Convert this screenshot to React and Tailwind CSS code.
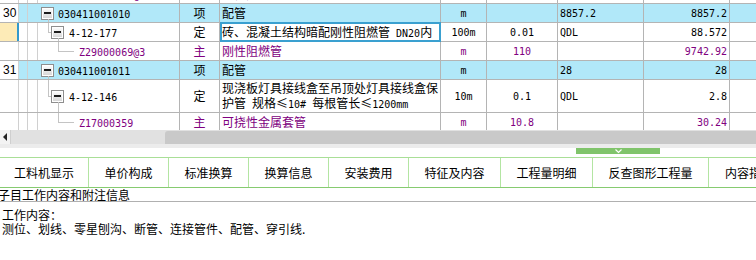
import React from 'react';

function Mix({ text }) {
  const parts = text.split(/([\x20-\x7e]+)/).filter(Boolean);
  return parts.map((p, i) =>
    /^[\x20-\x7e]+$/.test(p) ? (
      <span key={i} className="font-['DejaVu_Sans_Mono',monospace] text-[10px] whitespace-pre">{p}</span>
    ) : (
      <span key={i}>{p}</span>
    )
  );
}

function Mono({ children }) {
  return <span className="font-['DejaVu_Sans_Mono',monospace] text-[10px] whitespace-pre">{children}</span>;
}

function Box() {
  return (
    <div className="w-[13px] h-[13px] shrink-0 border border-[#8e8e8e] bg-linear-to-b from-white to-[#d4d4d4] flex items-center justify-center shadow-[inset_0_0_0_1px_#ffffff]">
      <div className="w-[7px] h-[2px] bg-[#1c1c1c]" />
    </div>
  );
}

function Tree({ lines, h }) {
  return (
    <svg className="absolute left-0 top-0 pointer-events-none" width="142" height={h} shapeRendering="crispEdges">
      {lines.map((l, i) => (
        <line key={i} x1={l[0]} y1={l[1]} x2={l[2]} y2={l[3]} stroke="#c4c4c4" strokeWidth="1" />
      ))}
    </svg>
  );
}

const padFor = { 0: 'pl-[3px]', 1: 'pl-[13px]', 2: 'pl-[41px]' };

function Row({ tall, blue, num, sel, level, lines, code, kind, name, unit, qty, price, total, purple, top }) {
  const h = tall ? 32 : 18;
  const tc = purple ? 'text-[#800080]' : 'text-black';
  return (
    <div
      className={`flex shrink-0 border-b border-[#b4b4b4] ${tall ? 'h-[33px]' : 'h-[19px]'} ${blue ? 'bg-[#b1e8f9]' : 'bg-white'} ${top ? '-mt-[15px]' : ''}`}
    >
      <div
        className={`w-[19px] shrink-0 flex items-center pl-[3px] font-['Liberation_Sans',sans-serif] text-[12px] ${sel ? 'bg-[#fdebb7] border-r-2 border-[#3399cc]' : 'bg-white border-r border-[#d0d0d0]'}`}
      >
        {num}
      </div>
      <div className="w-[9px] shrink-0 border-r border-[#d0d0d0]" />
      <div className={`w-[10px] shrink-0 border-r ${blue ? 'border-transparent' : 'border-[#d0d0d0]'}`} />
      <div className={`relative w-[142px] shrink-0 border-r border-[#b4b4b4] flex items-center ${padFor[level]} ${tc}`}>
        <Tree lines={lines} h={h} />
        {level < 2 && <Box />}
        <span className={level === 0 ? 'ml-[4px] relative' : level === 1 ? 'ml-[5px] relative' : 'relative'}>
          <Mono>{code}</Mono>
        </span>
      </div>
      <div className={`w-[40px] shrink-0 border-r border-[#b4b4b4] flex items-center justify-center ${tc}`}>{kind}</div>
      <div
        className={`relative w-[221px] shrink-0 border-r border-[#b4b4b4] flex pl-[2px] ${tc} ${Array.isArray(name) ? 'flex-col justify-center leading-[15px]' : 'items-center'}`}
      >
        {Array.isArray(name) ? (
          name.map((n, i) => (
            <div key={i} className="whitespace-nowrap">
              <Mix text={n} />
            </div>
          ))
        ) : (
          <span className="whitespace-nowrap">
            <Mix text={name} />
          </span>
        )}
        {sel && <div className="absolute -top-px -bottom-px left-0 -right-px border-2 border-[#3aa0d0] pointer-events-none" />}
      </div>
      <div className={`w-[46px] shrink-0 border-r border-[#b4b4b4] flex items-center justify-center ${tc}`}>
        <Mono>{unit}</Mono>
      </div>
      <div className={`w-[71px] shrink-0 border-r border-[#b4b4b4] flex items-center justify-center ${tc}`}>
        <Mono>{qty}</Mono>
      </div>
      <div className="w-[86px] shrink-0 border-r border-[#b4b4b4] flex items-center pl-[2px] text-black">
        <Mono>{price}</Mono>
      </div>
      <div className={`w-[86px] shrink-0 border-r border-[#b4b4b4] flex items-center justify-end pr-[2px] ${tc}`}>
        <Mono>{total}</Mono>
      </div>
      <div className="flex-1" />
    </div>
  );
}

const L0 = [[10.5, 15, 10.5, 18]];
const L1 = [[10.5, 0, 10.5, 9.5], [10.5, 9.5, 13, 9.5], [20.5, 15, 20.5, 18]];
const L2 = [[20.5, 0, 20.5, 9.5], [20.5, 9.5, 36, 9.5]];
const L1T = [[10.5, 0, 10.5, 16.5], [10.5, 16.5, 13, 16.5], [20.5, 22, 20.5, 32]];

const tabs = [
  { t: '工料机显示', w: 'w-[89px]' },
  { t: '单价构成', w: 'w-[80px]' },
  { t: '标准换算', w: 'w-[80px]' },
  { t: '换算信息', w: 'w-[80px]' },
  { t: '安装费用', w: 'w-[80px]' },
  { t: '特征及内容', w: 'w-[92px]' },
  { t: '工程量明细', w: 'w-[92px]' },
  { t: '反查图形工程量', w: 'w-[116px]' },
  { t: '内容指引', w: 'w-[80px]' },
];

export default function App() {
  return (
    <div className="w-[756px] h-[260px] overflow-hidden bg-white font-['Noto_Sans_CJK_SC',sans-serif] text-[12px] text-black">
      <div className="h-[130px] overflow-hidden flex flex-col">
        <Row top level={2} lines={L2} code="Z29000069@2" kind="主" name="刚性阻燃管" unit="m" qty="110" total="9742.92" purple />
        <Row blue num="30" level={0} lines={L0} code="030411001010" kind="项" name="配管" unit="m" price="8857.2" total="8857.2" />
        <Row sel level={1} lines={L1} code="4-12-177" kind="定" name="砖、混凝土结构暗配刚性阻燃管 DN20内" unit="100m" qty="0.01" price="QDL" total="88.572" />
        <Row level={2} lines={L2} code="Z29000069@3" kind="主" name="刚性阻燃管" unit="m" qty="110" total="9742.92" purple />
        <Row blue num="31" level={0} lines={L0} code="030411001011" kind="项" name="配管" unit="m" price="28" total="28" />
        <Row
          tall
          level={1}
          lines={L1T}
          code="4-12-146"
          kind="定"
          name={['现浇板灯具接线盒至吊顶处灯具接线盒保', '护管 规格≤10# 每根管长≤1200mm']}
          unit="10m"
          qty="0.1"
          price="QDL"
          total="2.8"
        />
        <Row level={2} lines={L2} code="Z17000359" kind="主" name="可挠性金属套管" unit="m" qty="10.8" total="30.24" purple />
      </div>

      {/* horizontal scrollbar */}
      <div className="flex h-[14px] bg-[#e1e1e1]">
        <div className="w-[11px] shrink-0 bg-[#f3f3f3] border-r border-[#cfcfcf] flex items-center justify-center">
          <div className="w-0 h-0 border-y-[4px] border-y-transparent border-r-[4px] border-r-[#222]" />
        </div>
        <div className="w-[154px] shrink-0" />
        <div className="flex-1 mt-px bg-[#c9c9c9] rounded-tl-[3px]" />
      </div>

      {/* splitter */}
      <div className="h-[4px] bg-[#ececec]" />
      <div className="h-[6px] flex">
        <div className="ml-[576px] w-[84px] h-[6px] bg-[#80c46b] flex items-center justify-center">
          <svg width="7" height="5" viewBox="0 0 7 5">
            <path d="M0.5 0.5 L3.5 3.5 L6.5 0.5" stroke="#ffffff" strokeWidth="1.2" fill="none" />
          </svg>
        </div>
      </div>
      <div className="h-[3px]" />

      {/* tabs */}
      <div className="flex h-[31px] border-t border-b border-t-[#a9df97] border-b-[#86cb70] overflow-hidden">
        {tabs.map((tb, i) => (
          <div
            key={i}
            className={`${tb.w} shrink-0 flex items-center justify-center whitespace-nowrap ${i < tabs.length - 1 ? 'border-r border-[#b3e5a2]' : ''}`}
          >
            {tb.t}
          </div>
        ))}
      </div>

      {/* info */}
      <div className="h-[14px] border-b border-[#b0b0b0] leading-[13px] -ml-[2px] whitespace-nowrap">子目工作内容和附注信息</div>
      <div className="pt-[6px] pl-[2px] leading-[14px]">
        <div>工作内容：</div>
        <div>测位、划线、零星刨沟、断管、连接管件、配管、穿引线.</div>
      </div>
    </div>
  );
}
